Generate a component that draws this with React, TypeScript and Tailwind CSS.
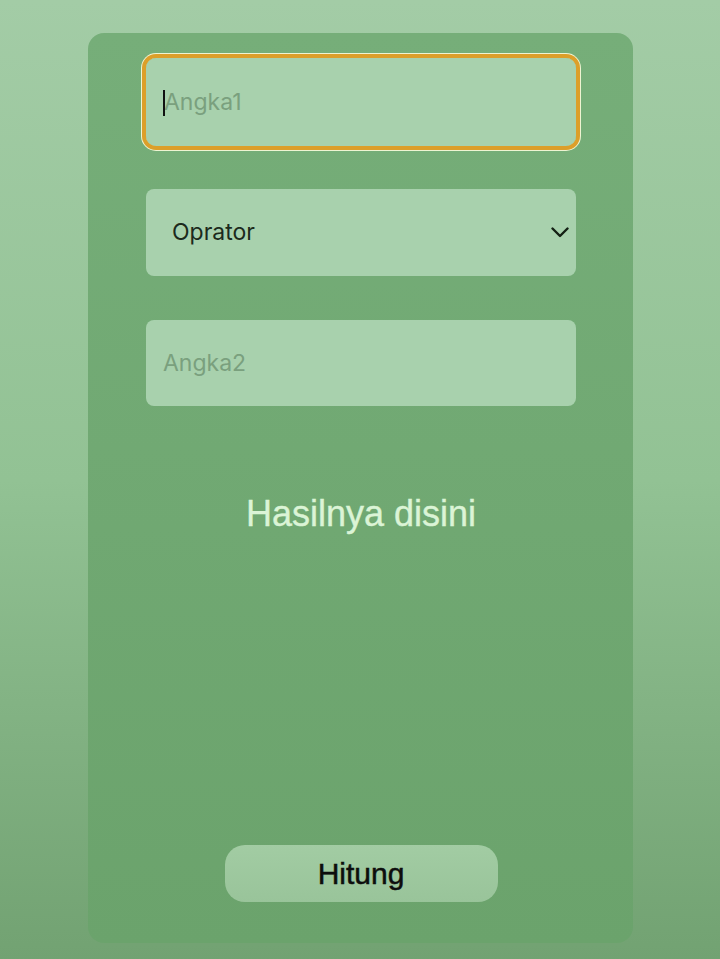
import React from "react";

export default function App() {
  return (
    <div className="min-h-[959px] w-[720px] bg-gradient-to-b from-[#a3cca6] via-[#92c294] to-[#72a272] pt-[33px] pl-[88px]">
      <div className="flex h-[910px] w-[545px] flex-col rounded-[16px] bg-gradient-to-b from-[#76ae79] to-[#6ba36c] pl-[58px] pr-[57px] pt-[25px] pb-[41px]">
        <div className="relative h-[88px] w-full rounded-[10px] shadow-[0_0_0_4px_#dc9f2a,0_0_0_5px_#eef4d2]">
          <input
            placeholder="Angka1"
            className="h-full w-full rounded-[10px] bg-[#a8d1ad] pl-[18px] text-[23px] text-[#1c2a1c] outline-none placeholder:text-[#7aa07e]"
            style={{ fontFamily: "Inter, 'Noto Sans', sans-serif" }}
          />
          <span className="pointer-events-none absolute left-[17px] top-[32px] h-[26px] w-[2px] bg-[#111]" />
        </div>

        <div className="relative mt-[43px] h-[87px] w-full">
          <select
            className="h-full w-full appearance-none rounded-[8px] bg-[#a8d1ad] pl-[26px] text-[23px] text-[#1c2a1c] outline-none"
            style={{ fontFamily: "Inter, 'Noto Sans', sans-serif" }}
            defaultValue=""
          >
            <option value="">Oprator</option>
            <option value="+">+</option>
            <option value="-">-</option>
            <option value="*">*</option>
            <option value="/">/</option>
          </select>
          <svg
            className="pointer-events-none absolute right-[7px] top-[38px]"
            width="18"
            height="11"
            viewBox="0 0 18 11"
            fill="none"
          >
            <path d="M1.5 1.5L9 9L16.5 1.5" stroke="#142014" strokeWidth="2.4" strokeLinecap="round" strokeLinejoin="round" />
          </svg>
        </div>

        <input
          placeholder="Angka2"
          className="mt-[44px] h-[86px] w-full rounded-[8px] bg-[#a8d1ad] pl-[17px] text-[23px] text-[#1c2a1c] outline-none placeholder:text-[#7aa07e]"
          style={{ fontFamily: "Inter, 'Noto Sans', sans-serif" }}
        />

        <div
          className="mt-[88px] text-center text-[36px] leading-[40px] text-[#dbf4d6] [-webkit-text-stroke:0.4px_#dbf4d6]"
          style={{ fontFamily: "'Liberation Sans', Arial, sans-serif" }}
        >
          Hasilnya disini
        </div>

        <div className="mt-auto flex justify-center">
          <button
            className="h-[57px] w-[273px] rounded-[20px] bg-gradient-to-b from-[#a2cca3] to-[#99c49a] text-[30px] text-[#0d0d0d] [-webkit-text-stroke:0.5px_#0d0d0d]"
            style={{ fontFamily: "'Liberation Sans', Arial, sans-serif" }}
          >
            Hitung
          </button>
        </div>
      </div>
    </div>
  );
}
